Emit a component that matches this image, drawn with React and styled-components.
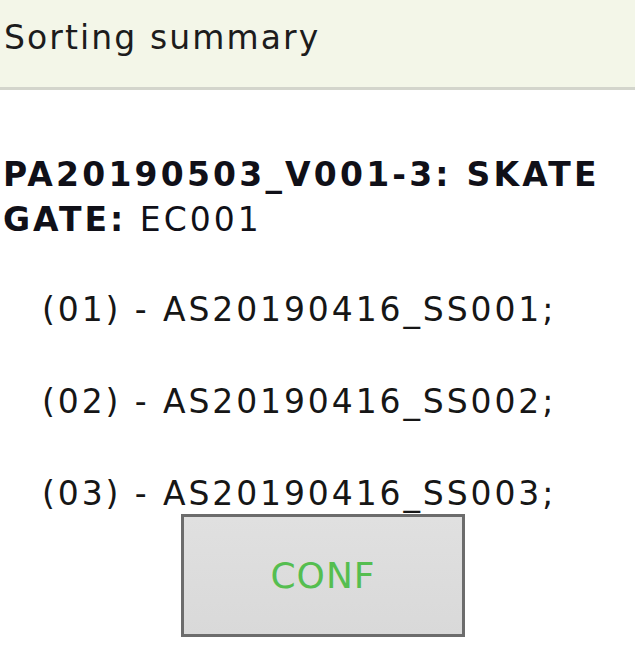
import React from "react";
import styled, { createGlobalStyle } from "styled-components";

const Global = createGlobalStyle`
  html, body { margin: 0; padding: 0; background: #ffffff; }
  body { font-family: "DejaVu Sans", Verdana, sans-serif; color: #141414; }
`;

const Page = styled.div`
  width: 635px;
  min-height: 659px;
  display: flex;
  flex-direction: column;
`;

const Header = styled.header`
  box-sizing: border-box;
  height: 90px;
  padding: 20px 0 0 4px;
  background: #f3f6e8;
  border-bottom: 3px solid #d3d5cc;
  font-size: 33px;
  line-height: 36px;
  letter-spacing: 2.1px;
  color: #1c1c1c;
`;

const Body = styled.main`
  display: flex;
  flex-direction: column;
  padding: 62px 0 0 3px;
`;

const Title = styled.div`
  font-size: 33px;
  line-height: 45px;
  font-weight: bold;
  letter-spacing: 3.2px;
  color: #101018;
  white-space: nowrap;
`;

const Line = styled.div`
  font-size: 33px;
  line-height: 45px;
  letter-spacing: 3px;
  color: #101018;
  white-space: nowrap;
`;

const Label = styled.span`
  font-weight: bold;
`;

const List = styled.ul`
  list-style: none;
  margin: 53px 0 0;
  padding: 0 0 0 39px;
  display: flex;
  flex-direction: column;
  gap: 62px;
`;

const Item = styled.li`
  font-size: 33px;
  line-height: 30px;
  letter-spacing: 2.9px;
  color: #161616;
  white-space: nowrap;
`;

const Button = styled.button`
  box-sizing: border-box;
  margin: 5px 0 0 178px;
  width: 284px;
  height: 123px;
  border: 3px solid #6c6c6c;
  background: linear-gradient(#e0e0e0, #d9d9d9);
  color: #55be50;
  font-family: "DejaVu Sans", Verdana, sans-serif;
  font-size: 36px;
  letter-spacing: 1px;
  cursor: pointer;
  padding: 0;
`;

const items = ["AS20190416_SS001", "AS20190416_SS002", "AS20190416_SS003"];

export default function App() {
  return (
    <Page>
      <Global />
      <Header>Sorting summary</Header>
      <Body>
        <Title>PA20190503_V001-3: SKATE</Title>
        <Line>
          <Label>GATE:</Label> EC001
        </Line>
        <List>
          {items.map((it, i) => (
            <Item key={it}>
              ({String(i + 1).padStart(2, "0")}) - {it};
            </Item>
          ))}
        </List>
        <Button>CONF</Button>
      </Body>
    </Page>
  );
}
